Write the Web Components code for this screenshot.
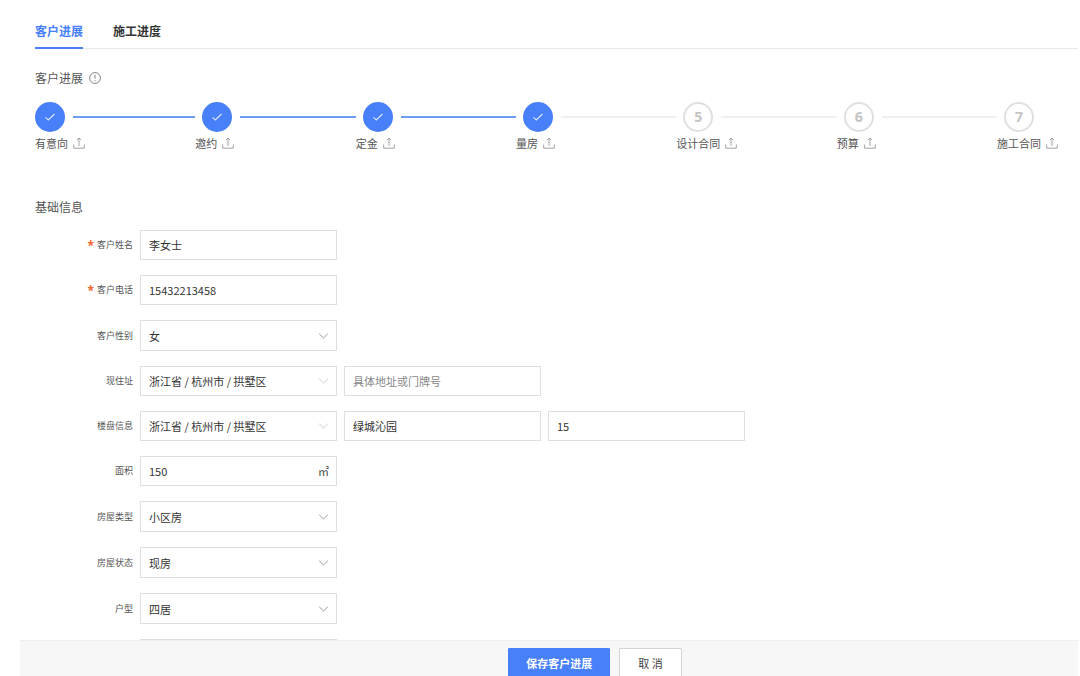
<!DOCTYPE html>
<html lang="zh-CN">
<head>
<meta charset="utf-8">
<meta name="viewport" content="width=device-width, initial-scale=1">
<title>客户进展</title>
<style>
  html, body { height: 100%; }
  body {
    margin: 0;
    background: #fff;
    color: #444;
    font: 11px/16px "Noto Sans CJK SC", "Noto Sans", sans-serif;
    --blue: #4880fa;
  }
</style>
</head>
<body>
<customer-page></customer-page>

<script>
const define = (name, html, setup) => {
  const template = document.createElement('template');
  template.innerHTML = html;
  customElements.define(name, class extends HTMLElement {
    connectedCallback() {
      if (this.shadowRoot) return;
      this.attachShadow({ mode: 'open' }).append(template.content.cloneNode(true));
      if (setup) setup(this, this.shadowRoot);
    }
  });
};

define('nav-tab', `
  <style>
    :host { display: block; }
    button {
      display: block; height: 36px; padding: 2px 0 0; border: 0; border-bottom: 2px solid transparent;
      background: none; color: #333; font: bold 12px/32px "Noto Sans CJK SC", sans-serif; cursor: pointer;
    }
    :host([active]) button { color: var(--blue); border-color: var(--blue); }
  </style>
  <button type="button"><slot></slot></button>`);

define('nav-tabs', `
  <style>
    :host { display: flex; gap: 30px; margin-left: 15px; height: 35px; border-bottom: 1px solid #e8e8e8; }
  </style>
  <slot></slot>`);

define('section-title', `
  <style>
    :host { display: block; }
    h2 { display: flex; align-items: center; gap: 6px; margin: 0; color: #555; font: 12px/18px "Noto Sans CJK SC", sans-serif; }
  </style>
  <h2><slot></slot></h2>`);

define('info-icon', `
  <style>:host { display: flex; } svg { display: block; }</style>
  <svg width="12" height="12" viewBox="0 0 12 12" fill="none" stroke="#777" stroke-width="0.9" aria-hidden="true">
    <circle cx="6" cy="6" r="5.4"/><path d="M6 2.8v4.1M6 8v1.2"/>
  </svg>`);

define('progress-step', `
  <style>
    :host { display: block; flex: 1; min-width: 0; }
    :host([last]) { flex: none; }
    .track { display: flex; align-items: center; gap: 8px; height: 30px; padding-left: 7px; }
    :host([first]) .track { padding-left: 0; }
    .dot {
      display: flex; align-items: center; justify-content: center; box-sizing: border-box;
      width: 30px; height: 30px; border: 2px solid #e0e0e0; border-radius: 50%;
      color: #c4c4c4; font: bold 14px/20px "Noto Sans", sans-serif;
    }
    .bar { flex: 1; height: 2px; background: #efefef; }
    svg { display: none; }
    :host([done]) .dot { border-color: var(--blue); background: var(--blue); }
    :host([done]) .dot svg { display: block; }
    :host([done]:not([current])) .bar { background: #6c9ef3; }
    :host([last]) .bar { display: none; }
    .name { display: flex; align-items: center; gap: 5px; margin-top: 3px; color: #555; white-space: nowrap; }
    button { padding: 0; border: 0; background: none; cursor: pointer; }
    button svg { display: block; }
  </style>
  <div class="track">
    <span class="dot"><span class="num"></span><svg width="12" height="12" viewBox="0 0 12 12" fill="none" stroke="#dbe6ff" stroke-width="1.1"><path d="M1.5 6.3L4.3 9 10.5 3"/></svg></span>
    <span class="bar"></span>
  </div>
  <div class="name">
    <slot></slot>
    <button type="button" aria-label="上传"><svg width="12" height="12" viewBox="0 0 12 12" fill="none" stroke="#999" stroke-width="0.9"><path d="M0.7 7.5v3.7h10.6V7.5M6 9V1M4 3l2-2 2 2"/></svg></button>
  </div>`,
  (host, root) => {
    if (!host.hasAttribute('done')) root.querySelector('.num').textContent = host.getAttribute('step');
  });

/* One boxed control: a text input, or a select when it has a kind. */
const controlStyle = `
    .box { display: grid; align-items: center; width: 197px; }
    .box > * { grid-area: 1 / 1; }
    input, select {
      box-sizing: border-box; width: 100%; height: 30px; margin: 0; padding: 0 8px;
      border: 1px solid #dfdfdf; border-radius: 0; background: #fff; color: #333;
      font: inherit; appearance: none; outline: none;
    }
    select.tall { height: 31px; }
    input::placeholder { color: #888; opacity: 1; }
    .arrow, .unit { justify-self: end; margin-right: 8px; pointer-events: none; }
    .arrow { stroke: #999; }
    .arrow.light { stroke: #ccc; }`;

const buildControl = (host, id) => {
  const box = document.createElement('div');
  box.className = 'box';
  const kind = host.getAttribute('kind');
  const value = host.getAttribute('value') || '';
  if (kind) {
    const select = document.createElement('select');
    (host.getAttribute('options') || value).split(',').forEach(text => select.add(new Option(text, text, false, text === value)));
    if (kind === 'select') select.className = 'tall';
    select.id = id;
    box.append(select);
    box.insertAdjacentHTML('beforeend', `<svg class="arrow ${kind === 'cascade' ? 'light' : ''}" width="11" height="8" viewBox="0 0 11 8" fill="none" aria-hidden="true"><path d="M1.2 1.8L5.5 6l4.3-4.2"/></svg>`);
  } else {
    const input = document.createElement('input');
    input.type = host.getAttribute('type') || 'text';
    input.id = id;
    input.value = value;
    input.placeholder = host.getAttribute('placeholder') || '';
    box.append(input);
    if (host.hasAttribute('unit')) {
      const unit = document.createElement('span');
      unit.className = 'unit';
      unit.textContent = host.getAttribute('unit');
      box.append(unit);
    }
  }
  return box;
};

define('text-field', `<style>:host { display: block; } ${controlStyle}</style>`, (host, root) => {
  const box = buildControl(host, 'control');
  box.querySelector('input').setAttribute('aria-label', host.getAttribute('label'));
  root.append(box);
});

define('form-field', `
  <style>
    :host { display: flex; align-items: center; gap: 7px; }
    label { width: 98px; color: #555; font-size: 9px; text-align: right; white-space: nowrap; }
    :host([required]) label::before { content: "*"; margin-right: 3px; color: #f26430; font: bold 12px/9px "Noto Sans", sans-serif; vertical-align: -2px; }
    ${controlStyle}
  </style>
  <label for="control"></label>
  <slot></slot>`,
  (host, root) => {
    const label = root.querySelector('label');
    label.textContent = host.getAttribute('label');
    label.after(buildControl(host, 'control'));
  });

define('action-button', `
  <style>
    :host { display: block; }
    button {
      height: 30px; padding: 0 18px; border: 1px solid #d4d4d4; border-radius: 1px;
      background: #fff; color: #444; font: 11px/16px "Noto Sans CJK SC", sans-serif; white-space: pre; cursor: pointer;
    }
    :host([primary]) button { border-color: var(--blue); background: var(--blue); color: #fff; font-weight: bold; padding: 0 17px; }
  </style>
  <button type="button"><slot></slot></button>`);

define('customer-page', `
  <style>
    :host { display: flex; flex-direction: column; height: 100vh; box-sizing: border-box; padding: 0 2px 0 20px; }
    main { flex: 1; min-height: 0; overflow: hidden; padding-top: 13px; }
    section { padding: 0 20px 0 15px; }
    .progress { padding-top: 20px; }
    .steps { display: flex; margin-top: 15px; }
    .basics { padding-top: 47px; }
    form { display: grid; gap: 15px; margin-top: 14px; }
    footer {
      display: flex; justify-content: center; align-items: flex-start; gap: 9px; box-sizing: border-box;
      height: 36px; padding: 7px 0 0 92px; overflow: hidden; border-top: 1px solid #efefef; background: #f7f7f7;
    }
  </style>
  <main>
    <nav-tabs>
      <nav-tab active>客户进展</nav-tab>
      <nav-tab>施工进度</nav-tab>
    </nav-tabs>
    <section class="progress">
      <section-title>客户进展<info-icon></info-icon></section-title>
      <div class="steps">
        <progress-step step="1" done first>有意向</progress-step>
        <progress-step step="2" done>邀约</progress-step>
        <progress-step step="3" done>定金</progress-step>
        <progress-step step="4" done current>量房</progress-step>
        <progress-step step="5">设计合同</progress-step>
        <progress-step step="6">预算</progress-step>
        <progress-step step="7" last>施工合同</progress-step>
      </div>
    </section>
    <section class="basics">
      <section-title>基础信息</section-title>
      <form>
        <form-field label="客户姓名" required value="李女士"></form-field>
        <form-field label="客户电话" required type="tel" value="15432213458"></form-field>
        <form-field label="客户性别" kind="select" value="女" options="女,男"></form-field>
        <form-field label="现住址" kind="cascade" value="浙江省 / 杭州市 / 拱墅区">
          <text-field label="具体地址" placeholder="具体地址或门牌号"></text-field>
        </form-field>
        <form-field label="楼盘信息" kind="cascade" value="浙江省 / 杭州市 / 拱墅区">
          <text-field label="楼盘名称" value="绿城沁园"></text-field>
          <text-field label="楼号" value="15"></text-field>
        </form-field>
        <form-field label="面积" value="150" unit="㎡"></form-field>
        <form-field label="房屋类型" kind="select" value="小区房"></form-field>
        <form-field label="房屋状态" kind="select" value="现房"></form-field>
        <form-field label="户型" kind="select" value="四居"></form-field>
        <form-field label=""></form-field>
      </form>
    </section>
  </main>
  <footer>
    <action-button primary>保存客户进展</action-button>
    <action-button>取 消</action-button>
  </footer>`);
</script>
</body>
</html>
